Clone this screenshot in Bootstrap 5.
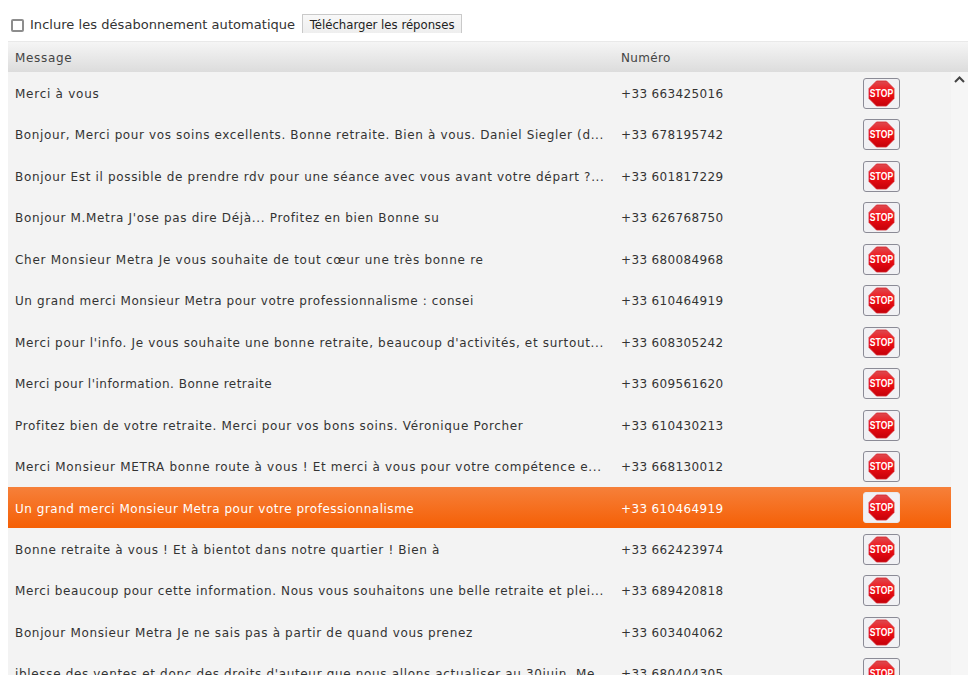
<!DOCTYPE html>
<html lang="fr">
<head>
<meta charset="utf-8">
<title>Réponses</title>
<link href="https://cdn.jsdelivr.net/npm/bootstrap@5.3.0/dist/css/bootstrap.min.css" rel="stylesheet">
<style>
html,body{height:690px;overflow:hidden;background:#fff}
body{font-family:"DejaVu Sans","Liberation Sans",sans-serif;font-size:12px;color:#333}
.page-wrap{padding:14px 8px 0 8px}
.tool-bar{height:27px;padding-left:3px}
.auto-check{width:13px;height:13px;margin:5px 6px 0 0;border:2px solid #8d8d8d;border-radius:2px;background:#fff;appearance:none;flex:none}
.auto-label{font-size:13px;letter-spacing:.04px;color:#333;margin:1px 7px 0 0}
.dl-btn{width:160px;height:19px;padding:0;border:1px solid #c9c9c9;border-bottom:0;border-radius:1px 1px 0 0;background:linear-gradient(#f8f8f8,#eeeeee);font:13px "DejaVu Sans Condensed","Liberation Sans",sans-serif;color:#222}
.grid-box{height:634px;overflow:hidden}
.grid-head{height:31px;padding-top:2px;border-top:1px solid #e9e9e9;background:linear-gradient(#f5f5f5,#dcdcdc);color:#444}
.cell-msg{width:606px;padding-left:7px;white-space:nowrap;overflow:hidden;flex:none;letter-spacing:.66px}
.cell-num{width:242px;padding-left:7px;flex:none;letter-spacing:.35px}
.grid-row{height:41.46px;padding-top:2.6px;background:#f3f3f3;color:#333}
.grid-row.row-on{background:linear-gradient(#f6803a,#f55f05);color:#fff}
.grid-rows{width:943px;flex:none}
.track{width:17px;background:#f6f6f6}
.track svg{display:block;margin:4px auto 0}
.stop-btn{width:37px;height:31px;padding:0;margin:0 0 1.2px 7px;border:1px solid #8b8b96;border-radius:3px;background:#f1f1f4;line-height:0}
.row-on .stop-btn{border-color:#e9e9ec;background:#f1f1f4}
.stop-btn text{font:bold 10.5px "Liberation Sans",sans-serif;fill:#fff}
</style>
</head>
<body>
<div class="page-wrap">
  <div class="tool-bar d-flex align-items-start">
    <input class="auto-check" type="checkbox" id="auto">
    <label class="auto-label" for="auto">Inclure les désabonnement automatique</label>
    <button class="dl-btn" type="button">Télécharger les réponses</button>
  </div>
  <div class="grid-box">
    <div class="grid-head d-flex align-items-center">
      <div class="cell-msg">Message</div>
      <div class="cell-num">Numéro</div>
    </div>
    <div class="d-flex">
      <div class="grid-rows" id="rows"></div>
      <div class="track flex-grow-1">
        <svg width="11" height="7" viewBox="0 0 11 7"><path d="M1 6 5.5 1.5 10 6" fill="none" stroke="#444" stroke-width="2"/></svg>
      </div>
    </div>
  </div>
</div>
<script>
var data=[
["Merci à vous","+33 663425016",.74],
["Bonjour, Merci pour vos soins excellents. Bonne retraite. Bien à vous. Daniel Siegler (d...","+33 678195742",.63],
["Bonjour Est il possible de prendre rdv pour une séance avec vous avant votre départ ?...","+33 601817229",.66],
["Bonjour M.Metra J'ose pas dire Déjà... Profitez en bien Bonne su","+33 626768750",.66],
["Cher Monsieur Metra Je vous souhaite de tout cœur une très bonne re","+33 680084968",.72],
["Un grand merci Monsieur Metra pour votre professionnalisme : consei","+33 610464919",.59],
["Merci pour l'info. Je vous souhaite une bonne retraite, beaucoup d'activités, et surtout...","+33 608305242",.66],
["Merci pour l'information. Bonne retraite","+33 609561620",.49],
["Profitez bien de votre retraite. Merci pour vos bons soins. Véronique Porcher","+33 610430213",.67],
["Merci Monsieur METRA bonne route à vous ! Et merci à vous pour votre compétence e...","+33 668130012",.69],
["Un grand merci Monsieur Metra pour votre professionnalisme","+33 610464919",.52],
["Bonne retraite à vous ! Et à bientot dans notre quartier ! Bien à","+33 662423974",.66],
["Merci beaucoup pour cette information. Nous vous souhaitons une belle retraite et plei...","+33 689420818",.62],
["Bonjour Monsieur Metra Je ne sais pas à partir de quand vous prenez","+33 603404062",.65],
["iblesse des ventes et donc des droits d'auteur que nous allons actualiser au 30juin. Me","+33 680404305",.66]
];
var icon='<svg width="27" height="27" viewBox="0 0 27 27"><defs><linearGradient id="g" x1="0" y1="0" x2="0" y2="1"><stop offset="0" stop-color="#dc4a50"/><stop offset=".45" stop-color="#f40f14"/><stop offset="1" stop-color="#c4000a"/></linearGradient></defs><polygon points="8.5,1 18.5,1 26,8.5 26,18.5 18.5,26 8.5,26 1,18.5 1,8.5" fill="url(#g)" stroke="#d8262c" stroke-width=".8" stroke-linejoin="round"/><text transform="translate(13.5 17.2) scale(.82 1)" text-anchor="middle">STOP</text></svg>';
document.getElementById('rows').innerHTML=data.map(function(d,i){
 return '<div class="grid-row d-flex align-items-center'+(i==10?' row-on':'')+'"><div class="cell-msg" style="letter-spacing:'+d[2]+'px">'+d[0]+'</div><div class="cell-num">'+d[1]+'</div><button class="stop-btn" type="button">'+icon+'</button></div>';
}).join('');
</script>
<script src="https://cdn.jsdelivr.net/npm/bootstrap@5.3.0/dist/js/bootstrap.bundle.min.js"></script>
</body>
</html>
